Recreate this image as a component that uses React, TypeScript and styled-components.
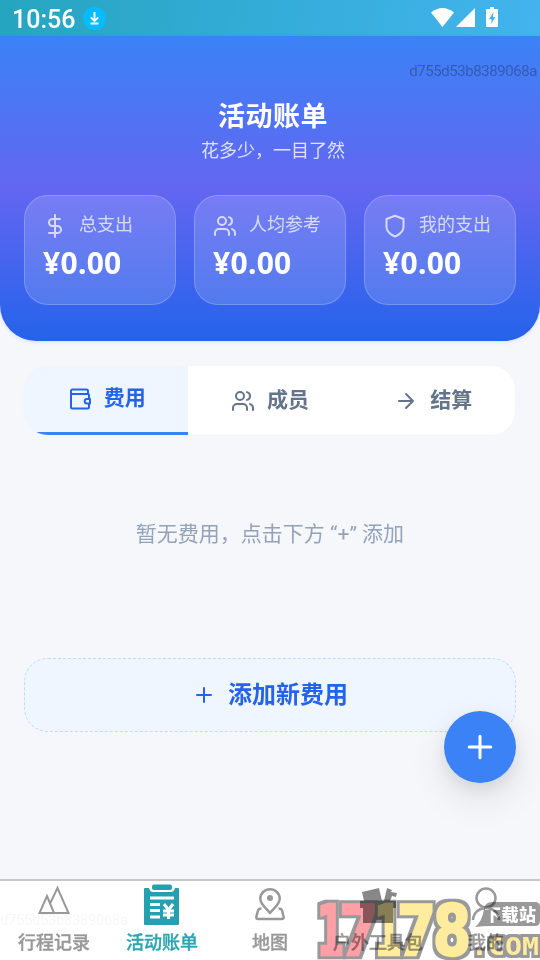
import React from "react";
import styled, { createGlobalStyle } from "styled-components";

const Global = createGlobalStyle`
  * { box-sizing: border-box; }
  body { margin: 0; background: #f5f7fb; }
  button { border: 0; padding: 0; margin: 0; font: inherit; background: none; }
`;

const Screen = styled.div`
  position: relative;
  width: 540px;
  height: 960px;
  overflow: hidden;
  display: flex;
  flex-direction: column;
  background: #f5f7fb;
  font-family: Roboto, "Noto Sans CJK SC", sans-serif;
`;

const StatusBar = styled.div`
  height: 36px;
  flex: none;
  display: flex;
  align-items: center;
  padding: 0 40px 0 12px;
  background: linear-gradient(100deg, #26a5bf 0%, #34acd8 50%, #43b4ee 100%);
`;
const Clock = styled.span`
  color: #fff;
  font-size: 25px;
  font-weight: 500;
  line-height: 36px;
  width: 71px;
  padding-top: 4px;
  white-space: nowrap;
`;
const StatusIcons = styled.div`
  margin-left: auto;
  display: flex;
  height: 36px;
`;

const Header = styled.header`
  height: 305px;
  flex: none;
  display: flex;
  flex-direction: column;
  padding: 62px 24px 36px;
  border-radius: 0 0 36px 36px;
  background: linear-gradient(180deg, #3b82f6 0%, #6366f1 50%, #2563eb 100%);
  box-shadow: 0 1px 4px rgba(37, 99, 235, 0.14);
  text-align: center;
`;
const Title = styled.h1`
  margin: 0;
  padding-left: 6px;
  color: #fff;
  font-size: 27px;
  font-weight: 700;
  line-height: 39px;
  letter-spacing: 0.5px;
`;
const Subtitle = styled.p`
  margin: 0;
  padding-left: 6px;
  color: rgba(255, 255, 255, 0.8);
  font-size: 18px;
  line-height: 28px;
`;
const Stats = styled.div`
  margin-top: auto;
  display: grid;
  grid-template-columns: repeat(3, 152px);
  gap: 18px;
`;
const StatCard = styled.div`
  height: 110px;
  padding: 16px 18px;
  border: 1px solid rgba(255, 255, 255, 0.2);
  border-radius: 24px;
  background: rgba(255, 255, 255, 0.15);
  text-align: left;
`;
const StatLabel = styled.div`
  height: 26px;
  display: flex;
  gap: 12px;
  color: rgba(255, 255, 255, 0.72);
  font-size: 18px;
  line-height: 26px;
  svg { margin-top: 2px; flex: none; }
`;
const StatValue = styled.div`
  margin-top: 6px;
  color: #fff;
  font-family: "Noto Sans", sans-serif;
  font-size: 30px;
  font-weight: 700;
  letter-spacing: 0.3px;
  line-height: 38px;
`;

const Tabs = styled.nav`
  flex: none;
  width: 491px;
  height: 69px;
  margin: 25px 0 0 24px;
  display: grid;
  grid-template-columns: repeat(3, 1fr);
  overflow: hidden;
  border-radius: 24px;
  background: #fff;
  box-shadow: 0 0 1px rgba(0, 0, 0, 0.08);
`;
const Tab = styled.button<{ $active?: boolean }>`
  display: flex;
  align-items: center;
  justify-content: center;
  gap: 12px;
  padding-left: ${(p) => (p.$active ? "2px" : "1px")};
  font-size: 21px;
  font-weight: 700;
  line-height: 30px;
  color: ${(p) => (p.$active ? "#2563eb" : "#64748b")};
  background: ${(p) => (p.$active ? "#eff6ff" : "#fff")};
  border-bottom: ${(p) => (p.$active ? "3px solid #3b82f6" : "0")};
  &:last-child { padding-left: 0; }
  span { margin-top: ${(p) => (p.$active ? "-3px" : "-2px")}; }
`;
const Empty = styled.p`
  flex: none;
  margin: 83px 0 0;
  text-align: center;
  color: #94a3b8;
  font-size: 21px;
  line-height: 32px;
`;
const AddButton = styled.button`
  flex: none;
  width: 492px;
  height: 74px;
  margin: 108px 0 0 24px;
  display: flex;
  align-items: center;
  justify-content: center;
  gap: 12px;
  border: 1px dashed #bfdbfe;
  border-radius: 24px;
  background: #eff6ff;
  color: #2563eb;
  font-size: 24px;
  font-weight: 700;
  line-height: 34px;
  span { margin-top: -1px; }
`;
const Fab = styled.button`
  position: absolute;
  right: 24px;
  top: 711px;
  width: 72px;
  height: 72px;
  display: grid;
  place-items: center;
  border-radius: 50%;
  color: #fff;
  background: #3b82f6;
  box-shadow: 0 15px 38px rgba(0, 0, 0, 0.1), 0 6px 15px rgba(0, 0, 0, 0.07);
`;

const BottomNav = styled.nav`
  flex: none;
  height: 81px;
  margin-top: auto;
  display: grid;
  grid-template-columns: repeat(5, 1fr);
  border-top: 2px solid #c8c8c8;
  background: #fff;
`;
const NavItem = styled.div<{ $active?: boolean }>`
  display: flex;
  flex-direction: column;
  align-items: center;
  color: ${(p) => (p.$active ? "#2ba5b2" : "#999")};
  font-size: 18px;
  font-weight: 500;
  -webkit-text-stroke: 0.35px currentColor;
  line-height: 26px;
  white-space: nowrap;
  svg { display: block; margin-bottom: 3px; }
`;

const DeviceId = styled.span<{ $faint?: boolean }>`
  position: absolute;
  ${(p) => (p.$faint ? "left: 0; top: 911px;" : "right: 3px; top: 62px;")}
  font-size: 15px;
  letter-spacing: -0.43px;
  line-height: 18px;
  color: ${(p) => (p.$faint ? "rgba(0,0,0,0.035)" : "rgba(0,0,0,0.27)")};
`;
const Watermark = styled.svg`
  position: absolute;
  right: 0;
  bottom: 0;
  mix-blend-mode: multiply;
`;

type IconProps = { size?: number; width?: number; children: React.ReactNode };
const LineIcon = ({ size = 24, width = 2, children }: IconProps) => (
  <svg width={size} height={size} viewBox="0 0 24 24" fill="none" stroke="currentColor"
    strokeWidth={width} strokeLinecap="round" strokeLinejoin="round">{children}</svg>
);
const People = () => (
  <>
    <path d="M16 21v-2a4 4 0 0 0-4-4H6a4 4 0 0 0-4 4v2" />
    <circle cx="9" cy="7" r="4" />
    <path d="M22 21v-2a4 4 0 0 0-3-3.87M16 3.13a4 4 0 0 1 0 7.75" />
  </>
);

const stats = [
  { label: "总支出", icon: <path d="M12 1v22M17 5H9.5a3.5 3.5 0 0 0 0 7h5a3.5 3.5 0 0 1 0 7H6" /> },
  { label: "人均参考", icon: <People /> },
  { label: "我的支出", icon: <path d="M12 22.5s8.5-3.2 8.5-9.5V5L12 1.8 3.5 5v8c0 6.3 8.5 9.5 8.5 9.5z" /> },
];

const Digit = ({ x, w, color, children }: { x: number; w: number; color: string; children: string }) => (
  <g filter="url(#outline)">
    <text x={x} y="57" textLength={w} lengthAdjust="spacingAndGlyphs" fill={color}
      stroke={color} strokeWidth="2.5" strokeLinejoin="miter">{children}</text>
  </g>
);

export default function App() {
  return (
    <>
      <Global />
      <Screen>
        <StatusBar>
          <Clock>10:56</Clock>
          <svg width="24" height="24" viewBox="0 0 24 24" fill="none">
            <circle cx="11.5" cy="12.5" r="11.5" fill="#08baff" />
            <path d="M11.5 6v9M7.8 11.3l3.7 3.7 3.7-3.7M7.5 17.5h8" stroke="#fff" strokeWidth="1.9" />
          </svg>
          <StatusIcons>
            <svg width="70" height="36" viewBox="0 0 70 36" fill="#fff">
              <path d="M1 12.5Q12.5 3.5 24 12.5L12.5 27z" />
              <path d="M45 8v19H26z" />
              <path fillRule="evenodd" d="M60 7h4v2h3q1 0 1 1v16q0 1-1 1H57q-1 0-1-1V10q0-1 1-1h3zM63.5 12L59 19.2h2.6L61.3 24l4-7h-2.4z" />
            </svg>
          </StatusIcons>
        </StatusBar>

        <Header>
          <Title>活动账单</Title>
          <Subtitle>花多少，一目了然</Subtitle>
          <Stats>
            {stats.map((s) => (
              <StatCard key={s.label}>
                <StatLabel><LineIcon>{s.icon}</LineIcon>{s.label}</StatLabel>
                <StatValue>¥0.00</StatValue>
              </StatCard>
            ))}
          </Stats>
        </Header>

        <Tabs>
          <Tab $active>
            <LineIcon>
              <path d="M20 7V4a1.5 1.5 0 0 0-1.5-1.5h-14A1.5 1.5 0 0 0 3 4v16a1.5 1.5 0 0 0 1.5 1.5h15A1.5 1.5 0 0 0 21 20v-3M3 7h17a1 1 0 0 1 1 1v3" />
              <path d="M22 12h-3a2.3 2.3 0 0 0 0 4.6h3z" />
            </LineIcon>
            <span>费用</span>
          </Tab>
          <Tab><LineIcon><People /></LineIcon><span>成员</span></Tab>
          <Tab><LineIcon><path d="M5 12h14M12 5l7 7-7 7" /></LineIcon><span>结算</span></Tab>
        </Tabs>

        <Empty>暂无费用，点击下方 “+” 添加</Empty>
        <AddButton>
          <LineIcon><path d="M12 5v14M5 12h14" /></LineIcon>
          <span>添加新费用</span>
        </AddButton>

        <BottomNav>
          <NavItem>
            <svg width="44" height="46" viewBox="0 0 44 46" fill="none" stroke="#999" strokeWidth="2">
              <path d="M22 32L15 15 7.5 32H36.5L25.5 7 18.3 22" />
            </svg>
            行程记录
          </NavItem>
          <NavItem $active>
            <svg width="44" height="46" viewBox="0 0 44 46">
              <path fill="#25a0ae" d="M6 7h3q1 4 4 4h18q3 0 4-4h3q1 0 1 1v35q0 1-1 1H5q-1 0-1-1V8q0-1 1-1z" />
              <rect x="12" y="3.5" width="20" height="5.5" rx="2" fill="#25a0ae" />
              <path d="M10 17h24M10 23.5h10M10 29.5h10M10 36h10M24 23l4.5 6 4.5-6M28.5 29v9M23 30h11M23 34h11" stroke="#fff" strokeWidth="3" fill="none" />
            </svg>
            活动账单
          </NavItem>
          <NavItem>
            <svg width="44" height="46" viewBox="0 0 44 46" fill="none" stroke="#999" strokeWidth="2.5" strokeLinejoin="round">
              <path d="M22 32c-3-4-9.7-8.5-9.700-14.300a9.700 9.500 0 0 1 19.400 0c0 5.800-6.700 10.300-9.700 14.300z" />
              <circle cx="22" cy="17" r="3" fill="#999" stroke="none" />
              <path d="M13.500 27.500q-3 0-3.500 2L8.300 36q0 2 2 2h23.400q2 0 2-2L34 29.500q-.5-2-3.500-2" />
            </svg>
            地图
          </NavItem>
          <NavItem>
            <svg width="44" height="46" viewBox="0 0 44 46" fill="#888">
              <path d="M4 20h4l-2-9 17-4 3 13h2l3-13 5 2-1 2 6 1-1 4-4-1-2 5h6v7h-3v15H7V27H4z" />
            </svg>
            户外工具包
          </NavItem>
          <NavItem>
            <svg width="44" height="46" viewBox="0 0 44 46" fill="none" stroke="#999" strokeWidth="2.5">
              <circle cx="22" cy="17" r="9.5" />
              <path d="M9 39c1-16 25-16 26 0" />
            </svg>
            我的
          </NavItem>
        </BottomNav>

        <Fab aria-label="添加">
          <LineIcon size={36}><path d="M12 4.8v14.4M4.8 12h14.4" /></LineIcon>
        </Fab>
        <DeviceId>d755d53b8389068a</DeviceId>
        <DeviceId $faint>d755d53b8389068a</DeviceId>
        <Watermark width="226" height="62" viewBox="0 0 226 62">
          <defs>
            <filter id="outline" x="-20%" y="-20%" width="140%" height="140%" colorInterpolationFilters="sRGB">
              <feMorphology in="SourceAlpha" operator="dilate" radius="2.5" result="grown" />
              <feFlood floodColor="#999" />
              <feComposite in2="grown" operator="in" />
              <feMerge><feMergeNode /><feMergeNode in="SourceGraphic" /></feMerge>
            </filter>
          </defs>
          <g fontFamily="DejaVu Sans" fontWeight="700" fontSize="70">
            <Digit x={2.5} w={28} color="#ffa0a7">1</Digit>
            <Digit x={25} w={40} color="#ffa0a7">7</Digit>
            <Digit x={60} w={28} color="#ffec9f">1</Digit>
            <Digit x={83} w={39} color="#ffec9f">7</Digit>
            <Digit x={119} w={38} color="#ffec9f">8</Digit>
          </g>
          <g filter="url(#outline)">
            <text x="157" y="57" textLength="68" lengthAdjust="spacingAndGlyphs" fontFamily="DejaVu Sans Mono"
              fontWeight="700" fontSize="24" fill="#ffec9f">.COM</text>
          </g>
          <path fill="#999" d="M178 4h43q5 0 5 5v14q0 5-5 5h-44q-9 0-16 1 7-5 9-18 1-7 8-7z" />
          <text x="170" y="22.5" textLength="52" fontFamily="Noto Sans CJK SC" fontWeight="900" fontSize="17" fill="#fff">下载站</text>
        </Watermark>
      </Screen>
    </>
  );
}
